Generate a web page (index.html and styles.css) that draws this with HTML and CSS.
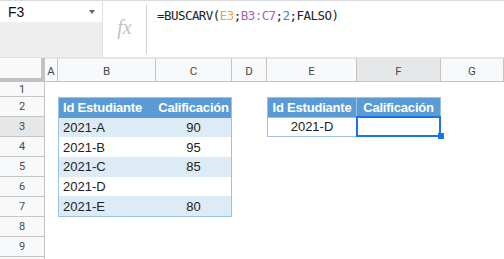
FILE: index.html
```html
<!DOCTYPE html>
<html lang="es">
<head>
  <meta charset="UTF-8" />
  <meta name="viewport" content="width=device-width, initial-scale=1.0" />
  <title>BUSCARV</title>
  <link rel="stylesheet" href="styles.css">
</head>
<body>

  <div class="toolbar">
    <div class="namebox">
      <div class="namebox-field">
        <span>F3</span>
        <span class="caret"></span>
      </div>
    </div>
    <div class="fx">fx</div>
    <div class="formula">=BUSCARV(<span class="ref-e">E3</span>;<span class="ref-b">B3:C7</span>;<span class="ref-n">2</span>;FALSO)</div>
  </div>

  <div class="sheet">
    <div class="corner"></div>
    <div class="colhead">A</div>
    <div class="colhead">B</div>
    <div class="colhead">C</div>
    <div class="colhead">D</div>
    <div class="colhead">E</div>
    <div class="colhead active">F</div>
    <div class="colhead">G</div>

    <div class="rowhead r1">1</div>
    <div class="rowhead r2">2</div>
    <div class="rowhead r3 active">3</div>
    <div class="rowhead r4">4</div>
    <div class="rowhead r5">5</div>
    <div class="rowhead r6">6</div>
    <div class="rowhead r7">7</div>
    <div class="rowhead r8">8</div>
    <div class="rowhead r9">9</div>
    <div class="rowhead r10"></div>

    <!-- B2:C7 -->
    <div class="table-left">
      <div class="trow head"><div>Id Estudiante</div><div class="center">Calificación</div></div>
      <div class="trow band"><div>2021-A</div><div class="center">90</div></div>
      <div class="trow"><div>2021-B</div><div class="center">95</div></div>
      <div class="trow band"><div>2021-C</div><div class="center">85</div></div>
      <div class="trow"><div>2021-D</div><div class="center"></div></div>
      <div class="trow band"><div>2021-E</div><div class="center">80</div></div>
    </div>

    <!-- E2:F3 -->
    <div class="table-right">
      <div class="cell head">Id Estudiante</div>
      <div class="cell head">Calificación</div>
      <div class="cell">2021-D</div>
      <div class="cell"></div>
    </div>

    <div class="selection"><span class="handle"></span></div>
  </div>

</body>
</html>
```

FILE: styles.css
```css
:root {
  --line: #c4c4c4;
  --head-bg: #f8f9fa;
  --head-active: #e6e7e9;
  --blue: #5b9bd5;
  --blue-light: #ddebf7;
  --blue-line: #9bc2e6;
  --select: #1a73e8;
}

body {
  margin: 0;
  width: 504px;
  height: 259px;
  overflow: hidden;
  background: #fff;
  font-family: "Liberation Sans", Arial, sans-serif;
  color: #222;
}

/* formula bar */
.toolbar {
  display: flex;
  height: 56px;
  border-top: 1px solid #dadce0;
  border-bottom: 1px solid #e2e2e2;
}

.namebox {
  width: 102px;
  background: #eeeeee;
  border-right: 1px solid #e0e0e0;
}

.namebox-field {
  display: flex;
  align-items: center;
  justify-content: space-between;
  height: 21px;
  padding: 0 7px 0 8px;
  background: #fff;
  font-size: 14px;
  color: #111;
}

.caret {
  width: 0;
  height: 0;
  border-left: 3.5px solid transparent;
  border-right: 3.5px solid transparent;
  border-top: 4px solid #666;
}

.fx {
  width: 43px;
  display: flex;
  align-items: center;
  justify-content: center;
  padding-bottom: 3px;
  font-family: "Liberation Serif", serif;
  font-style: italic;
  font-size: 20px;
  color: #c2c2c2;
}

.formula {
  flex: 1;
  margin: 3px 0;
  border-left: 1px solid #d2d2d2;
  padding: 4px 0 0 10px;
  font-family: "DejaVu Sans Mono", monospace;
  font-size: 12.5px;
  letter-spacing: -0.55px;
  color: #222;
}

.ref-e { color: #f0a236; }
.ref-b { color: #a35fc4; }
.ref-n { color: #3f83e4; }

/* grid */
.sheet {
  display: grid;
  grid-template-columns: 45px 13px 98px 76px 35px 90px 84px 1fr;
  grid-template-rows: 24px 15px repeat(8, 20px) 1fr;
  height: 202px;
  font-size: 11.5px;
}

.corner {
  grid-column: 1;
  grid-row: 1;
  background: var(--head-bg);
  border-right: 4px solid #c2c2c2;
  border-bottom: 4px solid #c2c2c2;
}

.colhead {
  grid-row: 1;
  display: flex;
  align-items: center;
  justify-content: center;
  padding-top: 1px;
  background: var(--head-bg);
  border-right: 1px solid var(--line);
  border-bottom: 1px solid var(--line);
  border-top: 1px solid #e8e8e8;
  font-family: Roboto, Arial, sans-serif;
  color: #4a4a4a;
}

.rowhead {
  grid-column: 1;
  display: flex;
  align-items: center;
  justify-content: center;
  background: var(--head-bg);
  border-right: 1px solid var(--line);
  border-bottom: 1px solid var(--line);
  font-family: Roboto, Arial, sans-serif;
  font-size: 11px;
  color: #4a4a4a;
}

.r1 { grid-row: 2; }
.r2 { grid-row: 3; }
.r3 { grid-row: 4; }
.r4 { grid-row: 5; }
.r5 { grid-row: 6; }
.r6 { grid-row: 7; }
.r7 { grid-row: 8; }
.r8 { grid-row: 9; }
.r9 { grid-row: 10; }
.r10 { grid-row: 11; border-bottom: none; }

.colhead.active,
.rowhead.active {
  background: var(--head-active);
}

/* tables */
.table-left {
  grid-column: 3 / 5;
  grid-row: 3 / 9;
  display: grid;
  grid-auto-rows: 1fr;
  border: 1px solid var(--blue-line);
  font-size: 13px;
}

.trow {
  display: grid;
  grid-template-columns: 97px 1fr;
  align-items: center;
}

.trow > div {
  padding-left: 4px;
}

.trow > .center {
  padding-left: 0;
  text-align: center;
}

.trow.band {
  background: var(--blue-light);
}

.trow.head {
  background: var(--blue);
  color: #fff;
  font-weight: bold;
  letter-spacing: -0.2px;
}

.table-right {
  grid-column: 6 / 8;
  grid-row: 3 / 5;
  display: grid;
  grid-template-columns: 89px 1fr;
  border-left: 1px solid var(--blue-line);
  border-top: 1px solid var(--blue-line);
  font-size: 13px;
}

.cell {
  display: flex;
  align-items: center;
  justify-content: center;
  border-right: 1px solid var(--blue-line);
  border-bottom: 1px solid var(--blue-line);
}

.cell.head {
  background: var(--blue);
  color: #fff;
  font-weight: bold;
  letter-spacing: -0.2px;
}

.selection {
  grid-column: 7;
  grid-row: 4;
  position: relative;
  margin: -1px 0 0 -1px;
  border: 2px solid var(--select);
}

.handle {
  position: absolute;
  right: -5px;
  bottom: -4px;
  width: 6px;
  height: 6px;
  background: var(--select);
}
```
